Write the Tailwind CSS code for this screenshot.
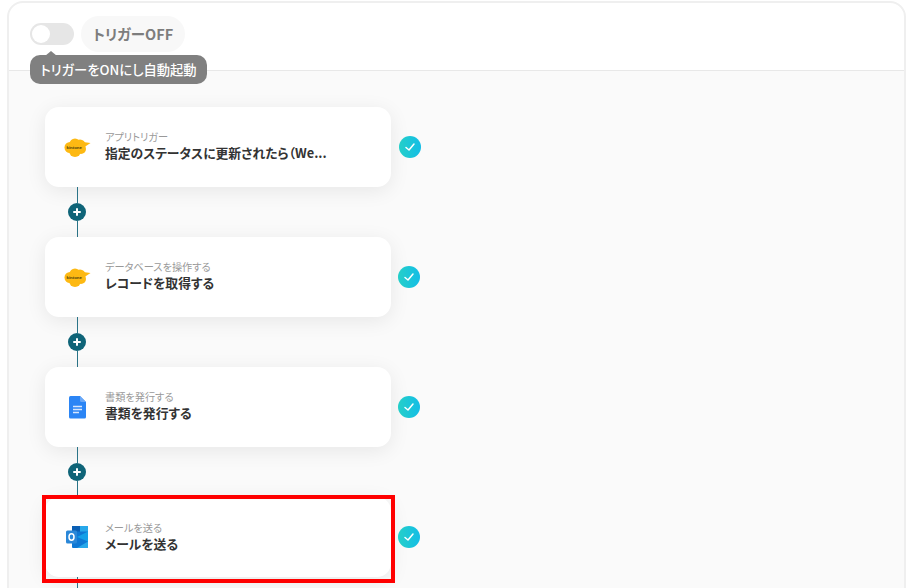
<!DOCTYPE html>
<html lang="ja">
<head>
<meta charset="UTF-8">
<title>フロー</title>
<script src="https://cdn.jsdelivr.net/npm/@tailwindcss/browser@4"></script>
</head>
<body class="bg-white font-['Noto_Sans_CJK_JP','Noto_Sans',sans-serif] [font-feature-settings:'palt'] w-[911px] h-[588px] overflow-hidden">
<div class="relative w-[911px] h-[588px] overflow-hidden">
  <div class="ml-[7px] mt-[1px] w-[899px] h-[620px] border-2 border-[#efefef] rounded-t-[16px] bg-white overflow-hidden">
    <!-- header -->
    <div class="relative h-[68px] border-b border-[#e8e8e8] flex items-start pl-[21px] pt-[13px] gap-[7px]">
      <div class="mt-[7px] w-[44px] h-[22px] rounded-full bg-[#e6e6e6] flex items-center pl-[2px]">
        <div class="w-[18px] h-[18px] rounded-full bg-white"></div>
      </div>
      <div class="h-[36px] w-[104px] rounded-full bg-[#f8f8f8] flex items-center justify-center text-[14.500px] font-bold text-[#7d7d7d]">トリガーOFF</div>
      <div class="absolute left-[21px] top-[52px] w-[177px] h-[29px] rounded-[10px] bg-[#808080] flex items-center justify-center text-[13.300px] font-medium text-white whitespace-nowrap z-10">
        <div class="absolute left-[15px] -top-[4px] w-0 h-0 border-x-[6px] border-x-transparent border-b-[5px] border-b-[#808080]"></div>
        トリガーをONにし自動起動
      </div>
    </div>
    <!-- flow -->
    <div class="bg-[#fafafa] h-[560px] pl-[36px] pt-[36px] flex flex-col">
      <!-- step 1 -->
      <div class="flex items-center">
        <div class="w-[346px] h-[80px] rounded-[14px] bg-white shadow-[0_4px_20px_rgba(0,0,0,0.08)] flex items-center pl-[18px]">
          <svg class="w-[28px] h-[24px] shrink-0" viewBox="0 0 28 24"><g fill="#fdb913"><circle cx="7" cy="12.500" r="5.500"/><circle cx="12" cy="9" r="5.500"/><circle cx="17" cy="10" r="5.500"/><circle cx="12" cy="16" r="6"/><circle cx="18" cy="14" r="5"/><path d="M20 7l7.500 1-6 4z"/></g><text x="3.500" y="13.800" font-size="4.300" font-weight="700" fill="#4a3c0c" font-family="Liberation Sans, sans-serif">kintone</text></svg>
          <div class="ml-[14px] -mt-[2px] min-w-0">
            <div class="text-[10.200px] leading-[14px] text-[#999]">アプリトリガー</div>
            <div class="text-[12.800px] leading-[18px] font-bold text-[#333] whitespace-nowrap">指定のステータスに更新されたら（We...</div>
          </div>
        </div>
        <div class="ml-[8px] w-[22px] h-[22px] rounded-full bg-gradient-to-r from-[#25cfc8] to-[#14bde6] flex items-center justify-center">
          <svg class="w-[12px] h-[12px]" viewBox="0 0 12 12" fill="none" stroke="#fff" stroke-width="1.500" stroke-linecap="round" stroke-linejoin="round"><path d="M2 6.500 5 9l5-6"/></svg>
        </div>
      </div>
      <!-- connector -->
      <div class="w-[64px] h-[50px] flex flex-col items-center">
        <div class="w-[1px] h-[15.500px] bg-[#2a7488]"></div>
        <div class="w-[18px] h-[18px] rounded-full bg-[#0f6478] flex items-center justify-center">
          <svg class="w-[8px] h-[8px]" viewBox="0 0 8 8" stroke="#fff" stroke-width="2" stroke-linecap="round"><path d="M4 1v6M1 4h6"/></svg>
        </div>
        <div class="w-[1px] h-[16.500px] bg-[#2a7488]"></div>
      </div>
      <!-- step 2 -->
      <div class="flex items-center">
        <div class="w-[346px] h-[80px] rounded-[14px] bg-white shadow-[0_4px_20px_rgba(0,0,0,0.08)] flex items-center pl-[18px]">
          <svg class="w-[28px] h-[24px] shrink-0" viewBox="0 0 28 24"><g fill="#fdb913"><circle cx="7" cy="12.500" r="5.500"/><circle cx="12" cy="9" r="5.500"/><circle cx="17" cy="10" r="5.500"/><circle cx="12" cy="16" r="6"/><circle cx="18" cy="14" r="5"/><path d="M20 7l7.500 1-6 4z"/></g><text x="3.500" y="13.800" font-size="4.300" font-weight="700" fill="#4a3c0c" font-family="Liberation Sans, sans-serif">kintone</text></svg>
          <div class="ml-[14px] -mt-[2px] min-w-0">
            <div class="text-[10.200px] leading-[14px] text-[#999]">データベースを操作する</div>
            <div class="text-[12.800px] leading-[18px] font-bold text-[#333] whitespace-nowrap">レコードを取得する</div>
          </div>
        </div>
        <div class="ml-[7px] w-[22px] h-[22px] rounded-full bg-gradient-to-r from-[#25cfc8] to-[#14bde6] flex items-center justify-center">
          <svg class="w-[12px] h-[12px]" viewBox="0 0 12 12" fill="none" stroke="#fff" stroke-width="1.500" stroke-linecap="round" stroke-linejoin="round"><path d="M2 6.500 5 9l5-6"/></svg>
        </div>
      </div>
      <div class="w-[64px] h-[50px] flex flex-col items-center">
        <div class="w-[1px] h-[15.500px] bg-[#2a7488]"></div>
        <div class="w-[18px] h-[18px] rounded-full bg-[#0f6478] flex items-center justify-center">
          <svg class="w-[8px] h-[8px]" viewBox="0 0 8 8" stroke="#fff" stroke-width="2" stroke-linecap="round"><path d="M4 1v6M1 4h6"/></svg>
        </div>
        <div class="w-[1px] h-[16.500px] bg-[#2a7488]"></div>
      </div>
      <!-- step 3 -->
      <div class="flex items-center">
        <div class="w-[346px] h-[80px] rounded-[14px] bg-white shadow-[0_4px_20px_rgba(0,0,0,0.08)] flex items-center pl-[18px]">
          <svg class="w-[28px] h-[24px] shrink-0" viewBox="0 0 28 24"><path d="M7.500 1h9.500l6 6v15a1.500 1.500 0 0 1-1.500 1.500h-14a1.500 1.500 0 0 1-1.500-1.500v-19.500a1.500 1.500 0 0 1 1.500-1.500z" fill="#2b85f5"/><path d="M17 1l6 6h-4.500a1.500 1.500 0 0 1-1.500-1.500z" fill="#6aa8f8"/><path d="M10 11.500h9M10 14.500h9M10 17.500h6" stroke="#d6e6fd" stroke-width="1.300"/></svg>
          <div class="ml-[14px] -mt-[2px] min-w-0">
            <div class="text-[10.200px] leading-[14px] text-[#999]">書類を発行する</div>
            <div class="text-[12.800px] leading-[18px] font-bold text-[#333] whitespace-nowrap">書類を発行する</div>
          </div>
        </div>
        <div class="ml-[7px] w-[22px] h-[22px] rounded-full bg-gradient-to-r from-[#25cfc8] to-[#14bde6] flex items-center justify-center">
          <svg class="w-[12px] h-[12px]" viewBox="0 0 12 12" fill="none" stroke="#fff" stroke-width="1.500" stroke-linecap="round" stroke-linejoin="round"><path d="M2 6.500 5 9l5-6"/></svg>
        </div>
      </div>
      <div class="w-[64px] h-[50px] flex flex-col items-center">
        <div class="w-[1px] h-[15.500px] bg-[#2a7488]"></div>
        <div class="w-[18px] h-[18px] rounded-full bg-[#0f6478] flex items-center justify-center">
          <svg class="w-[8px] h-[8px]" viewBox="0 0 8 8" stroke="#fff" stroke-width="2" stroke-linecap="round"><path d="M4 1v6M1 4h6"/></svg>
        </div>
        <div class="w-[1px] h-[16.500px] bg-[#2a7488]"></div>
      </div>
      <!-- step 4 -->
      <div class="flex items-center">
        <div class="w-[346px] h-[80px] rounded-[14px] bg-white shadow-[0_4px_20px_rgba(0,0,0,0.08)] flex items-center pl-[18px]">
          <svg class="w-[28px] h-[24px] shrink-0" viewBox="0 0 28 24"><rect x="9" y="1" width="16" height="11" fill="#0f78d4"/><rect x="9" y="1" width="8" height="5.500" fill="#0a5fb4"/><rect x="17" y="1" width="8" height="5.500" fill="#28a8ea"/><path d="M9 12h16v10a1 1 0 0 1-1 1h-14a1 1 0 0 1-1-1z" fill="#0f78d4"/><path d="M14 12l11-5.500v10z" fill="#14a0e8"/><path d="M14 23l11-6.500v5.500a1 1 0 0 1-1 1z" fill="#28a8ea"/><rect x="3" y="5.500" width="11" height="13" rx="1.500" fill="#2a87d8"/><ellipse cx="8.500" cy="12" rx="2.500" ry="3.200" fill="none" stroke="#fff" stroke-width="1.500"/></svg>
          <div class="ml-[14px] -mt-[1px] min-w-0">
            <div class="text-[10.200px] leading-[14px] text-[#999]">メールを送る</div>
            <div class="text-[12.800px] leading-[18px] font-bold text-[#333] whitespace-nowrap">メールを送る</div>
          </div>
        </div>
        <div class="ml-[7px] w-[22px] h-[22px] rounded-full bg-gradient-to-r from-[#25cfc8] to-[#14bde6] flex items-center justify-center">
          <svg class="w-[12px] h-[12px]" viewBox="0 0 12 12" fill="none" stroke="#fff" stroke-width="1.500" stroke-linecap="round" stroke-linejoin="round"><path d="M2 6.500 5 9l5-6"/></svg>
        </div>
      </div>
      <div class="w-[64px] flex flex-col items-center">
        <div class="w-[1px] h-[16px] bg-[#2a7488]"></div>
      </div>
    </div>
  </div>
  <!-- red annotation -->
  <div class="absolute left-[42px] top-[495px] w-[353px] h-[88px] border-4 border-[#f00] pointer-events-none"></div>
</div>
</body>
</html>
